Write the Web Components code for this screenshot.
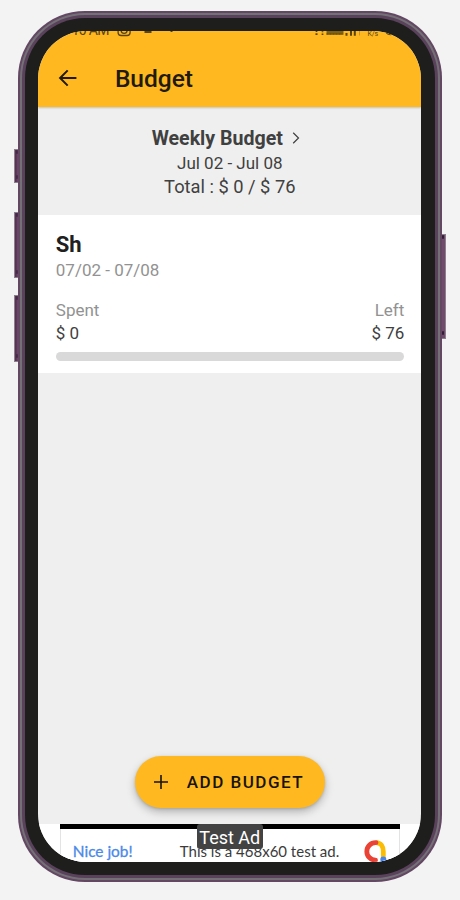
<!DOCTYPE html>
<html lang="en">
<head>
<meta charset="utf-8">
<title>Budget</title>
<style>
html,body{margin:0;height:100%;overflow:hidden;background:#f3f3f3}
body{font-family:Roboto,"Liberation Sans",sans-serif;color:#404040}
</style>
</head>
<body>
<phone-frame>
  <app-header>Budget</app-header>
  <budget-summary><span slot="title">Weekly Budget</span><span slot="range">Jul 02 - Jul 08</span><span slot="total">Total : $ 0 / $ 76</span></budget-summary>
  <budget-card><span slot="name">Sh</span><span slot="range">07/02 - 07/08</span><span slot="spent">$ 0</span><span slot="left">$ 76</span></budget-card>
  <add-button>ADD BUDGET</add-button>
  <ad-banner></ad-banner>
</phone-frame>
<script>
function define(name, html) {
  const t = document.createElement('template');
  t.innerHTML = html;
  customElements.define(name, class extends HTMLElement {
    constructor() {
      super();
      this.attachShadow({mode: 'open'}).appendChild(t.content.cloneNode(true));
    }
  });
}

define('side-key', `<style>
:host{display:block;position:absolute;width:4px;box-sizing:border-box;background:linear-gradient(90deg,#53304f,#5a3659 45%,#70496c);border:solid #8b818d;border-width:1px 0 1px 1px}
:host([right]){border-width:1px 1px 1px 0;background:#704b6c}
i{position:absolute;left:1px;width:2px;height:4px;background:#341c36;border-radius:1px;opacity:.55}
:host([right]) i{opacity:1;left:0}
i:first-child{top:3px}i:last-child{bottom:3px}
</style><i></i><i></i>`);

define('phone-frame', `<style>
:host{display:block;position:relative;box-sizing:border-box;width:460px;height:900px;padding:11px 18px 18px}
.purple{box-sizing:border-box;height:871px;padding:2px;border-radius:67px;background:#634763}
.ring{box-sizing:border-box;height:100%;padding:2px;border-radius:65px;background:#747176}
.inner{box-sizing:border-box;height:100%;padding:3px;border-radius:63px;background:#5b425c}
.bezel{box-sizing:border-box;height:100%;padding:13px 13.7px 13px 13.3px;border-radius:60px;background:#1e1e1c}
.screen{height:831px;border-radius:48px;overflow:hidden;background:#efefef;display:flex;flex-direction:column}
</style>
<side-key style="left:14px;top:149px;height:34px"></side-key>
<side-key style="left:14px;top:212px;height:66px"></side-key>
<side-key style="left:14px;top:295px;height:67px"></side-key>
<side-key right style="left:442px;top:234px;height:105px"></side-key>
<div class="purple"><div class="ring"><div class="inner"><div class="bezel"><div class="screen"><slot></slot></div></div></div></div></div>`);

define('status-bar', `<style>
:host{display:flex;height:12px;overflow:hidden}
svg{display:block;width:383px;height:12px}
text{font:14px Roboto,sans-serif;fill:#5b430f;stroke:none}
</style>
<svg viewBox="38.5 31 383 12" fill="none" stroke="#5b430f" stroke-width="1.3">
<text x="72" y="35" textLength="38">10 AM</text>
<rect x="118.6" y="25" width="12" height="10.5" rx="3"/><circle cx="124.6" cy="30.3" r="3"/>
<path d="M145 32h7" stroke-width="2"/><path d="M171 31.3h2"/>
<path d="M317 31v1M316 34.2h2M323 31.3v1M323 33.5v1.4" stroke-width="1.7"/>
<path d="M327 32.8h17" stroke-width="3.8" stroke="#80600f"/><path d="M327 34h16" stroke-width="1.2" stroke-dasharray="2 1"/>
<path d="M347 33v2.8M351.5 31v4.8M355.3 31v4.8" stroke-width="2"/>
<path d="M360 31v4.5" stroke="#c99127" stroke-width="1"/>
<text x="368" y="36.4" style="font-size:7px" textLength="10.5">K/s</text>
<path d="M387 32.7q2 2 5 1.5" stroke-width="1.8"/>
</svg>`);

define('app-header', `<style>
:host{display:flex;flex-direction:column;flex:none;height:76.3px;background:#ffb81f;color:#211b0e;box-shadow:0 1px 2px #0003;position:relative}
status-bar{flex:none}
.bar{display:flex;flex:none;align-items:center;box-sizing:border-box;height:70px;padding-left:18px}
svg{display:block;width:24px;height:24px;margin-right:34.6px}
.t{font-size:24.5px;font-weight:500;line-height:30px;padding-top:2px;white-space:nowrap}
</style>
<status-bar></status-bar>
<div class="bar"><svg viewBox="0 0 24 24" fill="none" stroke="currentColor" stroke-width="2"><path d="M20.4 12H4M11.7 4.4L4.1 12l7.6 7.6"/></svg><div class="t"><slot></slot></div></div>`);

define('budget-summary', `<style>
:host{display:flex;flex:none;flex-direction:column;align-items:center;box-sizing:border-box;height:108.2px;padding-top:20px;background:#efefef;color:#404040;white-space:nowrap}
.h{display:flex;align-items:center;font-size:19.6px;font-weight:700;line-height:24px;height:24px;padding-right:8px}
svg{width:8px;height:14px;margin:-2px 0 0 9px}
.r{font-size:17px;line-height:24px}.t{font-size:18.3px;line-height:24px}
</style>
<div class="h"><slot name="title"></slot><svg viewBox="0 0 8 14" fill="none" stroke="#404040" stroke-width="1.2"><path d="M1.2 1.8L6.5 7 1.2 12.2"/></svg></div>
<div class="r"><slot name="range"></slot></div>
<div class="t"><slot name="total"></slot></div>`);

define('budget-card', `<style>
:host{display:flex;flex:none;flex-direction:column;box-sizing:border-box;height:157.5px;padding:16px 17px 0 17.5px;background:#fff;color:#404040;font-size:17px;white-space:nowrap}
.n{font-size:22px;font-weight:700;line-height:27px;color:#202020}
.d,.l{color:#929292}.d{line-height:24px;margin-bottom:17px}
.row{display:flex;justify-content:space-between;line-height:23px}
.p{height:9px;border-radius:5px;background:#d9d9d9;margin-top:7px}
</style>
<div class="n"><slot name="name"></slot></div>
<div class="d"><slot name="range"></slot></div>
<div class="row l"><span>Spent</span><span>Left</span></div>
<div class="row"><slot name="spent"></slot><slot name="left"></slot></div>
<div class="p"></div>`);

define('add-button', `<style>
:host{display:flex;flex:1;align-items:flex-end;justify-content:center;padding-bottom:16.5px}
button{display:flex;align-items:center;box-sizing:border-box;width:190px;height:51.5px;padding:0 0 0 18px;border:0;border-radius:26px;background:#ffb81f;color:#17130a;font:500 17px Roboto,sans-serif;letter-spacing:1.5px;white-space:nowrap;box-shadow:0 4px 8px #00000040,0 1px 3px #0002}
svg{width:16px;height:16px;margin-right:18px}
</style>
<button><svg viewBox="0 0 16 16" fill="none" stroke="currentColor" stroke-width="1.6"><path d="M8 1v14M1 8h14"/></svg><slot></slot></button>`);

define('ad-banner', `<style>
:host{display:flex;flex:none;justify-content:center;height:38px;background:#fff;position:relative}
.ad{display:flex;align-items:flex-start;box-sizing:border-box;width:340px;height:38px;background:linear-gradient(#000,#000) top/100% 5px no-repeat,linear-gradient(#e3e3e3,#e3e3e3) left/1px 100% no-repeat,linear-gradient(#e3e3e3,#e3e3e3) right/1px 100% no-repeat,#fff;padding:18px 0 0 13px;white-space:nowrap;color:#3b3b3b}
.nice{color:#4a89e8;font:15.4px/18px Lato,sans-serif;-webkit-text-stroke:.3px #4a89e8;width:107px}
.copy{font:15px/18px Lato,sans-serif;width:184.5px}
.tag{position:absolute;left:158.5px;top:0;width:66px;height:25px;border-radius:3px;background:#434343;color:#fff;font-size:18px;line-height:27px;text-align:center;white-space:nowrap}
svg{width:23px;height:23px;margin-top:-2px}
</style>
<div class="ad"><div class="nice">Nice job!</div><div class="copy">This is a 468x60 test ad.</div>
<svg viewBox="0 0 23 23" fill="none" stroke-width="4.8"><path d="M12 2.7c5 0 7.3 4 7.3 8.8v7" stroke="#fbbc04"/><path d="M12 2.7H11.5a8.7 8.7 0 0 0 0 17.4" stroke="#ea4335" stroke-linecap="round"/><circle cx="19.3" cy="19.5" r="3" fill="#4285f4"/></svg></div>
<div class="tag">Test Ad</div>`);
</script>
</body>
</html>
